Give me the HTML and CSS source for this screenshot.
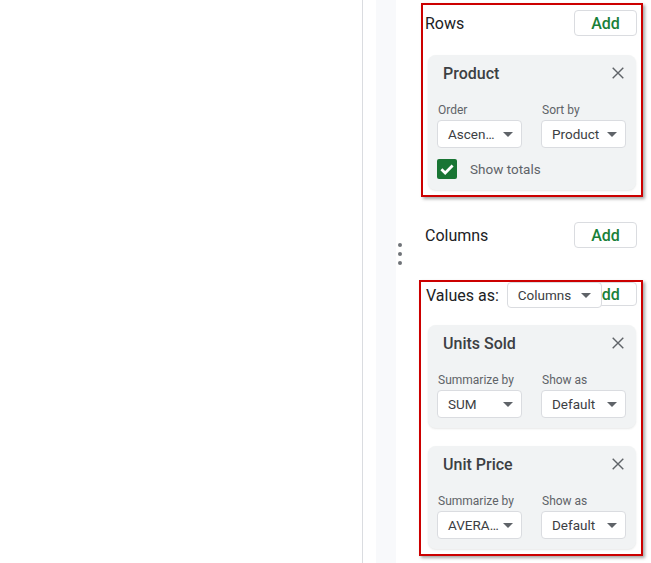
FILE: index.html
```html
<!DOCTYPE html>
<html lang="en">
<head>
<meta charset="utf-8">
<title>Pivot table editor</title>
<link rel="stylesheet" href="styles.css">
</head>
<body>
<div class="page">
  <div class="sheet"></div>
  <div class="spacer"></div>
  <div class="strip"></div>
  <div class="handle"><span class="dot"></span><span class="dot"></span><span class="dot"></span></div>
  <div class="panel">
    <div class="box box-rows">
      <div class="head">
        <span class="head-label">Rows</span>
        <button class="add">Add</button>
      </div>
      <div class="card card-rows">
        <div class="card-title">
          <span>Product</span>
          <svg class="close" viewBox="0 0 12 12" width="12" height="12"><path d="M0.7 0.7L11.3 11.3M11.3 0.7L0.7 11.3" stroke="#5f6368" stroke-width="1.4" fill="none"/></svg>
        </div>
        <div class="fields">
          <div class="field">
            <div class="label">Order</div>
            <div class="select"><span>Ascen…</span><i class="caret"></i></div>
          </div>
          <div class="field">
            <div class="label">Sort by</div>
            <div class="select"><span>Product</span><i class="caret"></i></div>
          </div>
        </div>
        <div class="check-row">
          <span class="checkbox"><svg viewBox="0 0 20 20" width="20" height="20"><path d="M4.4 10.2L8.2 14L15.6 6.6" stroke="#fff" stroke-width="2.8" fill="none"/></svg></span>
          <span class="check-label">Show totals</span>
        </div>
      </div>
    </div>

    <div class="plain-row">
      <span class="head-label">Columns</span>
      <button class="add">Add</button>
    </div>

    <div class="box box-values">
      <div class="values-row">
        <div class="values-as">
          <span class="head-label">Values as:</span>
          <div class="select select-auto"><span>Columns</span><i class="caret"></i></div>
        </div>
        <button class="add add-short">Add</button>
      </div>
      <div class="card card-value first">
        <div class="card-title">
          <span>Units Sold</span>
          <svg class="close" viewBox="0 0 12 12" width="12" height="12"><path d="M0.7 0.7L11.3 11.3M11.3 0.7L0.7 11.3" stroke="#5f6368" stroke-width="1.4" fill="none"/></svg>
        </div>
        <div class="fields">
          <div class="field">
            <div class="label">Summarize by</div>
            <div class="select"><span>SUM</span><i class="caret"></i></div>
          </div>
          <div class="field">
            <div class="label">Show as</div>
            <div class="select"><span>Default</span><i class="caret"></i></div>
          </div>
        </div>
      </div>
      <div class="card card-value second">
        <div class="card-title">
          <span>Unit Price</span>
          <svg class="close" viewBox="0 0 12 12" width="12" height="12"><path d="M0.7 0.7L11.3 11.3M11.3 0.7L0.7 11.3" stroke="#5f6368" stroke-width="1.4" fill="none"/></svg>
        </div>
        <div class="fields">
          <div class="field">
            <div class="label">Summarize by</div>
            <div class="select"><span>AVERA…</span><i class="caret"></i></div>
          </div>
          <div class="field">
            <div class="label">Show as</div>
            <div class="select"><span>Default</span><i class="caret"></i></div>
          </div>
        </div>
      </div>
    </div>
  </div>
</div>
</body>
</html>
```

FILE: styles.css
```css
* { box-sizing: border-box; }
html, body { margin: 0; padding: 0; background: #fff; }
body { font-family: Roboto, "Liberation Sans", Arial, sans-serif; color: #202124; }

.page { display: flex; width: 651px; height: 563px; overflow: hidden; }
.sheet { width: 363px; flex: none; border-right: 1px solid #dadce0; }
.spacer { width: 13px; flex: none; }
.strip { width: 20px; flex: none; background: #f8f9fb; }
.handle { width: 8px; flex: none; display: flex; flex-direction: column; align-items: center; gap: 5px; padding-top: 243px; }
.dot { width: 4px; height: 4px; border-radius: 50%; background: #6f7378; }

.panel { flex: 1; padding: 3px 0 0 17px; }

.box { border: 2px solid #cc0000; box-shadow: 2px 2px 3px rgba(0,0,0,0.35); background: #fff; }
.box-rows { width: 222px; padding-bottom: 5px; }
.box-values { width: 224px; margin-left: -2px; margin-top: 32px; padding-bottom: 5px; }

.head { display: flex; justify-content: space-between; align-items: center; height: 26px; margin: 5px 4px 0 2px; }
.head-label { font-size: 16px; color: #202124; }

.add { width: 63px; height: 26px; border: 1px solid #dadce0; border-radius: 4px; background: #fff; color: #188038; font-family: Roboto, "Liberation Sans", Arial, sans-serif; font-size: 16px; font-weight: 500; padding: 0; }
.add-short { height: 24px; }

.plain-row { display: flex; justify-content: space-between; align-items: center; width: 216px; height: 26px; margin-top: 25px; padding-left: 4px; }

.values-row { position: relative; display: flex; justify-content: flex-end; height: 26px; margin: 0 4px 0 5px; }
.values-as { position: absolute; left: 0; top: 0; z-index: 1; display: flex; align-items: center; gap: 8px; height: 26px; }

.card { background: #f1f3f4; border-radius: 8px; padding-top: 8px; box-shadow: 0 1px 2px rgba(60,64,67,0.12); }
.card-rows { margin: 19px 5px 0 5px; padding-bottom: 11px; }
.card-value { margin: 0 5px 0 7px; padding-bottom: 10px; }
.card-value.first { margin-top: 17px; }
.card-value.second { margin-top: 18px; }

.card-title { display: flex; justify-content: space-between; align-items: center; height: 20px; padding: 0 12px 0 15px; font-size: 16px; font-weight: 500; color: #3c4043; margin-bottom: 19px; }
.close { display: block; }

.fields { display: flex; gap: 19px; padding: 0 10px 0 9px; }
.label { font-size: 12px; line-height: 16px; color: #5f6368; padding-left: 1px; margin-bottom: 2px; }
.select { display: flex; align-items: center; justify-content: space-between; width: 85px; height: 28px; padding: 0 8px 0 10px; background: #fff; border: 1px solid #dadce0; border-radius: 4px; font-size: 13.5px; color: #3c4043; white-space: nowrap; }
.select-auto { width: auto; height: 26px; gap: 10px; padding: 0 10px; }
.caret { display: block; width: 0; height: 0; border-left: 5px solid transparent; border-right: 5px solid transparent; border-top: 5px solid #5f6368; }

.check-row { display: flex; align-items: center; gap: 13px; height: 20px; margin-top: 11px; padding-left: 9px; }
.checkbox { display: block; width: 20px; height: 20px; background: #197534; border-radius: 2px; }
.checkbox svg { display: block; }
.check-label { font-size: 13.5px; color: #5f6368; }
```
